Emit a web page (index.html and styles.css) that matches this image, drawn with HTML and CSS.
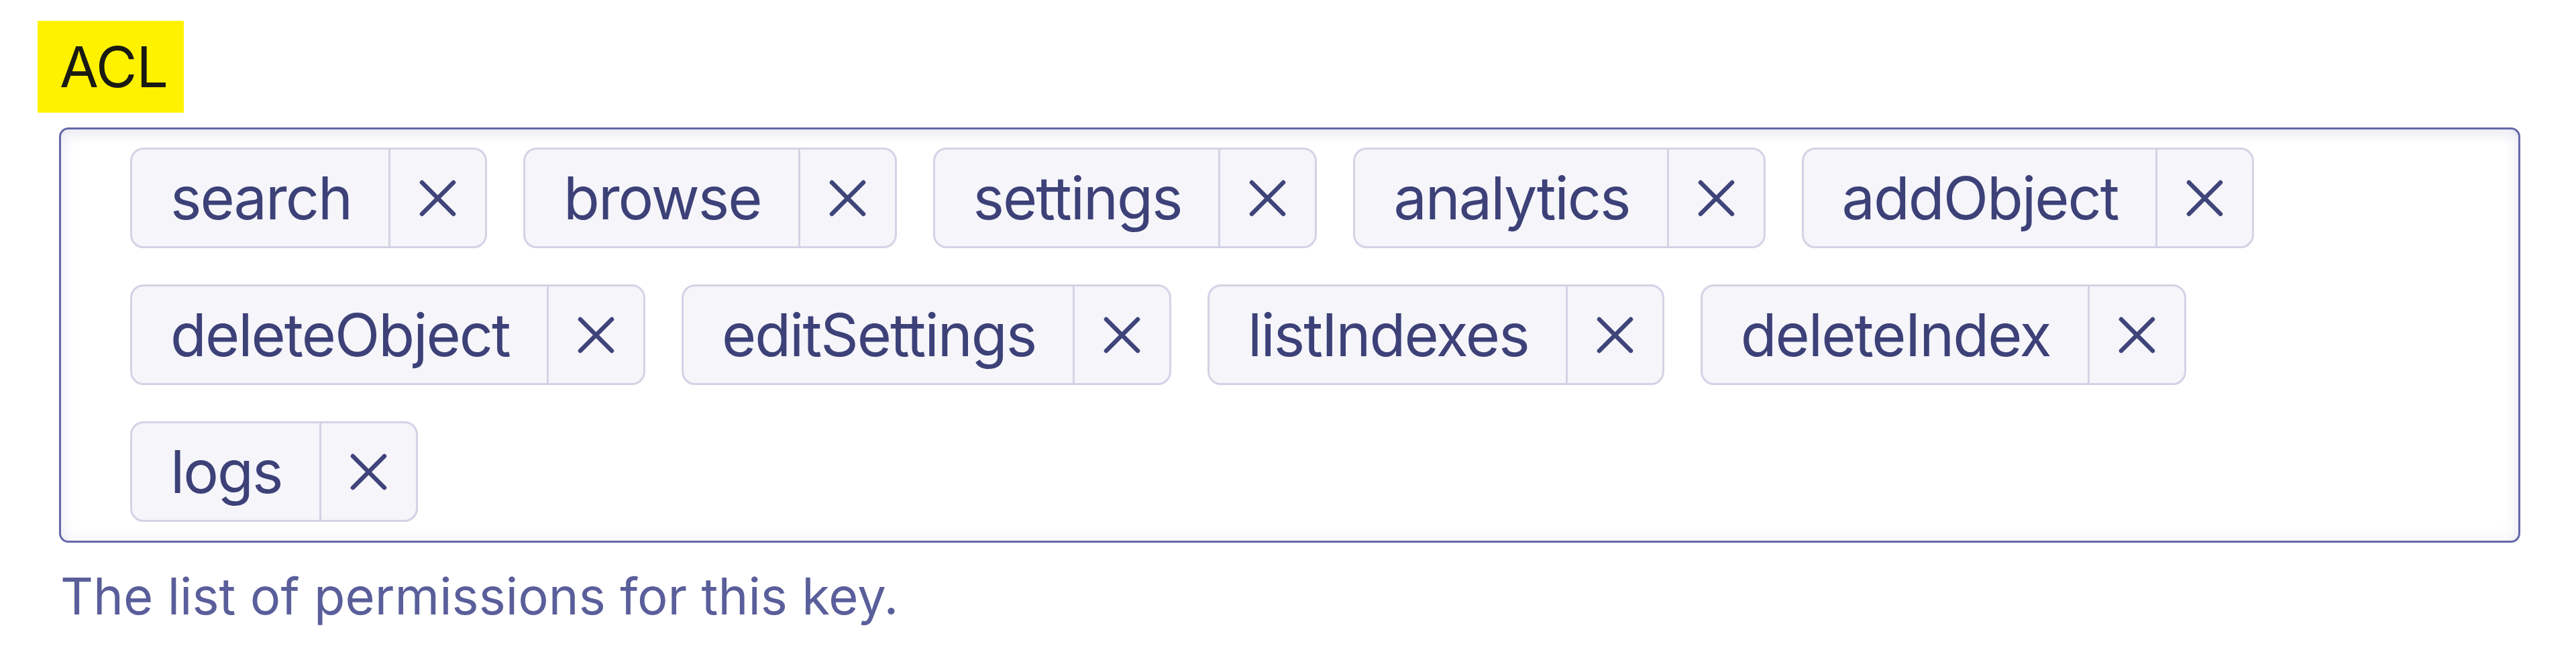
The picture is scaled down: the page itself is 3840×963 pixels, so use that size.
FILE: index.html
```html
<!DOCTYPE html>
<html lang="en">
<head>
    <meta charset="UTF-8">
    <meta name="viewport" content="width=device-width, initial-scale=1.0">
    <title>ACL</title>
    <link rel="stylesheet" href="styles.css">
</head>
<body>
    <div class="field">
        <label class="field-label">ACL</label>

        <div class="tag-input">
            <div class="tag"><span class="tag-text">search</span><button class="tag-remove" aria-label="Remove search"><svg viewBox="0 0 53 53"><path d="M3 3 L50 50 M50 3 L3 50"/></svg></button></div>
            <div class="tag"><span class="tag-text">browse</span><button class="tag-remove" aria-label="Remove browse"><svg viewBox="0 0 53 53"><path d="M3 3 L50 50 M50 3 L3 50"/></svg></button></div>
            <div class="tag"><span class="tag-text">settings</span><button class="tag-remove" aria-label="Remove settings"><svg viewBox="0 0 53 53"><path d="M3 3 L50 50 M50 3 L3 50"/></svg></button></div>
            <div class="tag"><span class="tag-text">analytics</span><button class="tag-remove" aria-label="Remove analytics"><svg viewBox="0 0 53 53"><path d="M3 3 L50 50 M50 3 L3 50"/></svg></button></div>
            <div class="tag"><span class="tag-text">addObject</span><button class="tag-remove" aria-label="Remove addObject"><svg viewBox="0 0 53 53"><path d="M3 3 L50 50 M50 3 L3 50"/></svg></button></div>
            <div class="tag"><span class="tag-text">deleteObject</span><button class="tag-remove" aria-label="Remove deleteObject"><svg viewBox="0 0 53 53"><path d="M3 3 L50 50 M50 3 L3 50"/></svg></button></div>
            <div class="tag"><span class="tag-text">editSettings</span><button class="tag-remove" aria-label="Remove editSettings"><svg viewBox="0 0 53 53"><path d="M3 3 L50 50 M50 3 L3 50"/></svg></button></div>
            <div class="tag"><span class="tag-text">listIndexes</span><button class="tag-remove" aria-label="Remove listIndexes"><svg viewBox="0 0 53 53"><path d="M3 3 L50 50 M50 3 L3 50"/></svg></button></div>
            <div class="tag"><span class="tag-text">deleteIndex</span><button class="tag-remove" aria-label="Remove deleteIndex"><svg viewBox="0 0 53 53"><path d="M3 3 L50 50 M50 3 L3 50"/></svg></button></div>
            <div class="tag"><span class="tag-text">logs</span><button class="tag-remove" aria-label="Remove logs"><svg viewBox="0 0 53 53"><path d="M3 3 L50 50 M50 3 L3 50"/></svg></button></div>
        </div>

        <p class="field-help">The list of permissions for this key.</p>
    </div>
</body>
</html>
```

FILE: styles.css
```css
body {
    margin: 0;
    padding: 31px 83px 0 88px;
    font-family: Inter, 'Noto Sans', sans-serif;
    background-color: #ffffff;
}
.field {
    display: flex;
    flex-direction: column;
    align-items: flex-start;
}
.field-label {
    display: inline-block;
    margin-left: -32px;
    padding: 0 24px 0 33px;
    height: 137px;
    line-height: 137px;
    font-size: 84px;
    letter-spacing: -1px;
    color: #1a1a14;
    background-color: #fff200; /* highlighted label */
}
.tag-input {
    align-self: stretch;
    display: flex;
    flex-wrap: wrap;
    gap: 54px;
    margin-top: 22px;
    padding: 27px 100px 28px 103px;
    border: 3px solid #6468aa;
    border-radius: 14px;
    box-shadow: inset 0 6px 18px rgba(60, 65, 130, 0.09), inset 0 0 28px rgba(60, 65, 130, 0.05);
}
.tag {
    display: flex;
    align-items: stretch;
    height: 144px;
    background-color: #f5f5fa;
    border: 3px solid #d3d3e6;
    border-radius: 20px;
    color: #3d4178;
}
.tag-text {
    display: flex;
    align-items: center;
    padding: 0 55px 0 57px;
    font-size: 88px;
    letter-spacing: -2px;
    line-height: 1;
}
.tag-remove {
    display: flex;
    align-items: center;
    justify-content: center;
    width: 144px;
    padding: 0;
    border: 0;
    border-left: 3px solid #d3d3e6;
    background: none;
    cursor: pointer;
}
.tag-remove svg {
    width: 53px;
    height: 53px;
    overflow: visible;
}
.tag-remove path {
    fill: none;
    stroke: #3f4479;
    stroke-width: 6.5;
    stroke-linecap: round;
}
.field-help {
    margin: 22px 0 0 2px;
    font-size: 76px;
    line-height: 114px;
    color: #5a5e9a;
}
```
